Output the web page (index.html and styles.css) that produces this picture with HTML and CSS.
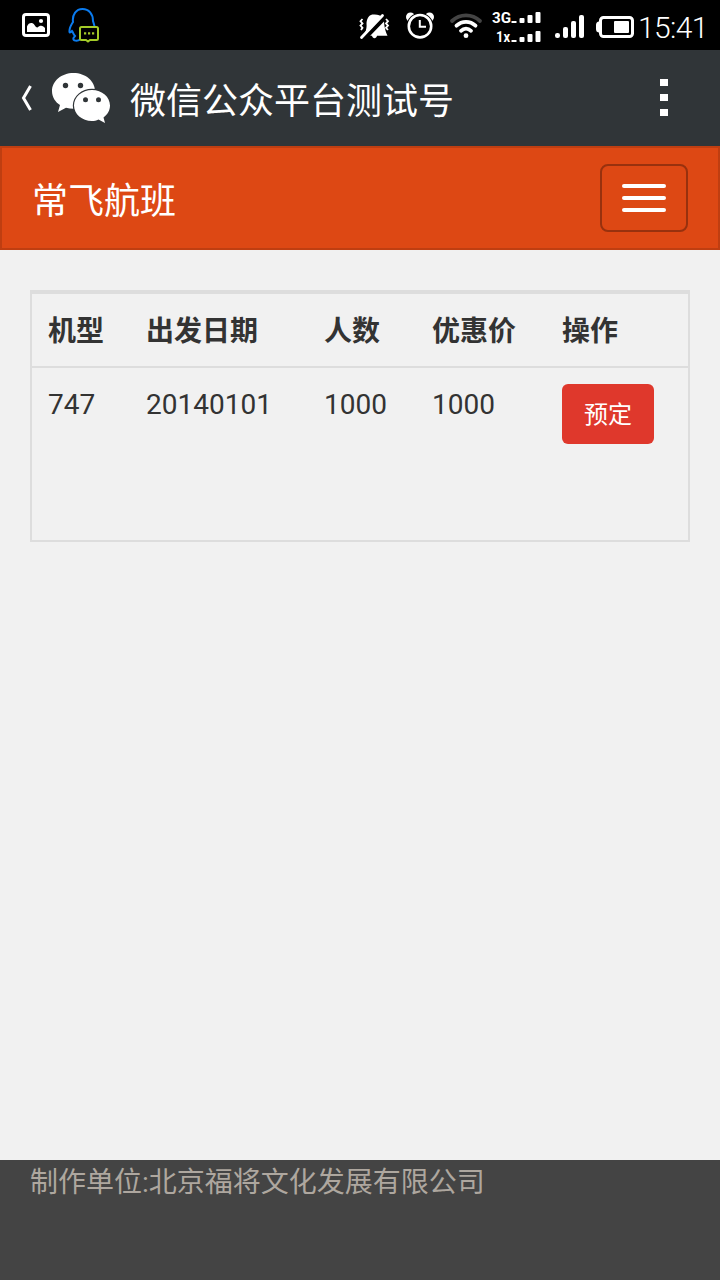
FILE: index.html
```html
<!DOCTYPE html>
<html lang="zh-CN">
<head>
<meta charset="utf-8">
<title>常飞航班</title>
<link rel="stylesheet" href="styles.css">
</head>
<body>
<div class="screen">
  <div class="status">
    <svg class="i-pic" width="28" height="24" viewBox="0 0 28 24"><rect x="1.500" y="1.500" width="25" height="21" rx="2.500" fill="none" stroke="#fff" stroke-width="3"/><circle cx="19" cy="8" r="2.100" fill="#fff"/><path d="M5 19V13.500c1.500-4 5.500-4.500 7.500-1.500 1 1.500 1.500 2.500 3 2.500 2.500-3 6-2 7.500.5v4z" fill="#fff"/></svg>
    <svg class="i-qq" width="32" height="36" viewBox="0 0 32 36" fill="none" stroke-width="2"><path d="M12 32.500C9.500 34.500 4.500 34 5.500 31L7 29C5 27 5 25 4 24C3 25 2 26 1.500 25C1 21 3 18 5 15C4 8 8 2 14.500 2S25 7 25 14L26.500 19" stroke="#0a7bef"/><path d="M13.500 20h15a1.500 1.500 0 0 1 1.500 1.500v10a1.500 1.500 0 0 1-1.500 1.500H22l-2 1.500-2-1.500h-4.500a1.500 1.500 0 0 1-1.500-1.500v-10a1.500 1.500 0 0 1 1.500-1.500z" fill="#000" stroke="#a4cc28"/><path d="M16 26.300h2.200M20 26.300h2.200M24 26.300h2.200" stroke="#a4cc28" stroke-width="2.300"/></svg>
    <svg class="i-mute" width="32" height="28" viewBox="0 0 32 28"><path d="M6 19.500Q8 16 7.500 10C8 4 11 1.500 14.500 1.500C18.500 1.200 21.500 2.500 23 4L7.500 20zM25 8.500C25.500 14 26 17 28.500 22.800H18C17.500 26 13.500 26 13 22.800H11.200z" fill="#fff"/><path d="M2.500 24.500L23.500 2.500" stroke="#fff" stroke-width="2.800" stroke-linecap="round"/><path d="M3.500 6L1.500 8.200L3.500 10.400L1.500 12.600L3.500 14.800L2 17M27 6L29 8.200L27 10.400L29 12.600L27 14.800L29 17" fill="none" stroke="#fff" stroke-width="1.800"/></svg>
    <svg class="i-alarm" width="30" height="28" viewBox="0 0 30 28"><circle cx="5.500" cy="5" r="4.500" fill="#fff"/><circle cx="24.500" cy="5" r="4.500" fill="#fff"/><circle cx="15" cy="14.200" r="13.500" fill="#000"/><circle cx="15" cy="14.200" r="11.200" fill="none" stroke="#fff" stroke-width="2.600"/><path d="M14.800 8v6.800H21" fill="none" stroke="#fff" stroke-width="2"/></svg>
    <svg class="i-wifi" width="34" height="26" viewBox="0 0 34 26" fill="none" stroke="#fff" stroke-width="3.800" stroke-linecap="round"><path d="M3 8C11 .5 23 .5 31 8" stroke="#444"/><path d="M7.500 12.700C13 7.500 21 7.500 26.500 12.700"/><path d="M12 17.800C15 15 19 15 22 17.800"/><circle cx="17" cy="22.700" r="2.400" fill="#fff" stroke="none"/></svg>
    <svg class="i-net" width="50" height="34" viewBox="0 0 50 34" fill="#fff"><text x="0" y="13.500" class="net" textLength="19" lengthAdjust="spacingAndGlyphs">3G</text><text x="4" y="32.500" class="net" textLength="14" lengthAdjust="spacingAndGlyphs">1x</text><path d="M19.500 12h5v2h-5zM19.500 31h5v2h-5z"/><rect x="27.500" y="9" width="5" height="5" rx="1"/><rect x="35.500" y="6" width="5" height="8" rx="1"/><rect x="43.500" y="3" width="5" height="11" rx="1"/><rect x="27.500" y="28" width="5" height="5" rx="1"/><rect x="35.500" y="25" width="5" height="8" rx="1"/><rect x="43.500" y="22" width="5" height="11" rx="1"/></svg>
    <svg class="i-sig" width="30" height="24" viewBox="0 0 30 24" fill="#fff"><rect x="0" y="18" width="5" height="5" rx="2.200"/><rect x="8" y="12" width="5" height="11" rx="2"/><rect x="16" y="6" width="5" height="17" rx="2"/><rect x="24" y="0" width="5" height="23" rx="2"/></svg>
    <svg class="i-bat" width="38" height="22" viewBox="0 0 38 22"><rect x="4.500" y="1.500" width="32" height="19" rx="3" fill="none" stroke="#fff" stroke-width="3"/><path d="M5 5.500H2.500Q0 6 0 9v4q0 3 2.500 3.500H5z" fill="#fff"/><rect x="18" y="5" width="15" height="12" rx="1" fill="#fff"/></svg>
    <span class="clock">15:41</span>
  </div>

  <header class="appbar">
    <svg class="back" width="12" height="28" viewBox="0 0 12 28"><path d="M9.500 2L2.500 14L9.500 26" fill="none" stroke="#fff" stroke-width="3"/></svg>
    <svg class="wechat" width="60" height="52" viewBox="0 0 60 52"><path d="M21.500 1C9.500 1 0 9 0 19c0 6 3.200 11 8 14L6 40l8-4.300c2.500.7 5 1.100 7.500 1.100C33.500 36.800 43 29 43 19S33.500 1 21.500 1z" fill="#fff"/><circle cx="13.500" cy="13.500" r="2.700" fill="#303538"/><circle cx="28.500" cy="13.500" r="2.700" fill="#303538"/><path d="M40 18c10 0 18 7 18 15.500 0 5-2.500 9-6.500 12L53 51l-6.500-3.500C44.500 48.500 42 49 40 49c-10 0-18-7-18-15.500S30 18 40 18z" fill="#fff" stroke="#303538" stroke-width="2.400" paint-order="stroke"/><circle cx="33.500" cy="27.700" r="2.500" fill="#303538"/><circle cx="46.500" cy="27.700" r="2.500" fill="#303538"/></svg>
    <h1 class="title">微信公众平台测试号</h1>
    <div class="more"><i></i><i></i><i></i></div>
  </header>

  <nav class="navbar">
    <span class="brand">常飞航班</span>
    <button class="toggle"><i></i><i></i><i></i></button>
  </nav>

  <main class="content">
    <div class="panel">
      <div class="row head"><span>机型</span><span>出发日期</span><span>人数</span><span>优惠价</span><span>操作</span></div>
      <div class="row"><span class="cell">747</span><span class="cell">20140101</span><span class="cell">1000</span><span class="cell">1000</span><button class="book">预定</button></div>
    </div>
  </main>

  <footer class="footer">制作单位:北京福将文化发展有限公司</footer>
</div>
</body>
</html>
```
FILE: styles.css
```css
* { box-sizing: border-box; }
body { margin: 0; font-family: Roboto, "Noto Sans CJK SC", sans-serif; color: #333; }
svg { display: block; flex: none; }
.screen { width: 720px; height: 1280px; display: flex; flex-direction: column; background: #f1f1f1; overflow: hidden; }

.status { height: 50px; flex: none; background: #000; display: flex; align-items: flex-start; }
.i-pic { margin: 13px 0 0 22px; }
.i-qq { margin: 7px 0 0 18px; }
.i-mute { margin: 13px 0 0 259px; }
.i-alarm { margin: 12px 0 0 14px; }
.i-wifi { margin: 13px 0 0 14px; }
.i-net { margin: 9px 0 0 9px; }
.i-sig { margin: 15px 0 0 13px; }
.i-bat { margin: 16px 0 0 11px; }
.net { font: 700 14px Roboto, sans-serif; }
.clock { margin: 10px 0 0 4px; font-size: 30px; line-height: 36px; font-weight: 300; color: #fff; letter-spacing: -0.6px; }

.appbar { height: 96px; flex: none; background: #303538; display: flex; align-items: flex-start; }
.back { margin: 34px 0 0 21px; }
.wechat { margin: 22px 0 0 19px; }
.title { margin: 27px 0 0 18px; font-size: 36px; line-height: 50px; font-weight: 400; color: #fff; }
.more { margin: 29px 52px 0 auto; display: flex; flex-direction: column; gap: 8px; }
.more i { width: 8px; height: 7px; background: #fff; }

.navbar { height: 104px; flex: none; background: #dd4814; border: 2px solid #bf3e11; display: flex; justify-content: space-between; align-items: flex-start; padding: 16px 30px 0 30px; }
.brand { padding-top: 4px; font-size: 36px; line-height: 68px; color: #fff; }
.toggle { width: 88px; height: 68px; border: 2px solid #98310e; border-radius: 8px; background: none; padding: 0; display: flex; flex-direction: column; align-items: center; justify-content: center; gap: 8px; }
.toggle i { width: 44px; height: 4px; border-radius: 2px; background: #fff; }

.content { flex: 1; padding: 40px 30px; }
.panel { height: 252px; border: 2px solid #ddd; border-top-width: 4px; }
.row { display: grid; grid-template-columns: 98px 178px 108px 130px 1fr; align-items: start; padding: 16px 0 0 16px; font-size: 28px; line-height: 40px; }
.head { height: 74px; padding-top: 18px; border-bottom: 2px solid #ddd; font-weight: 700; }
.cell { padding-top: 1px; }
.book { width: 92px; height: 60px; border: 0; border-radius: 6px; background: #df382c; color: #fff; font: 24px/60px Roboto, "Noto Sans CJK SC", sans-serif; padding: 1px 0 0; }

.footer { height: 120px; flex: none; background: #444; color: #aea79f; padding: 3px 0 0 30px; font-size: 28px; line-height: 40px; }
```
